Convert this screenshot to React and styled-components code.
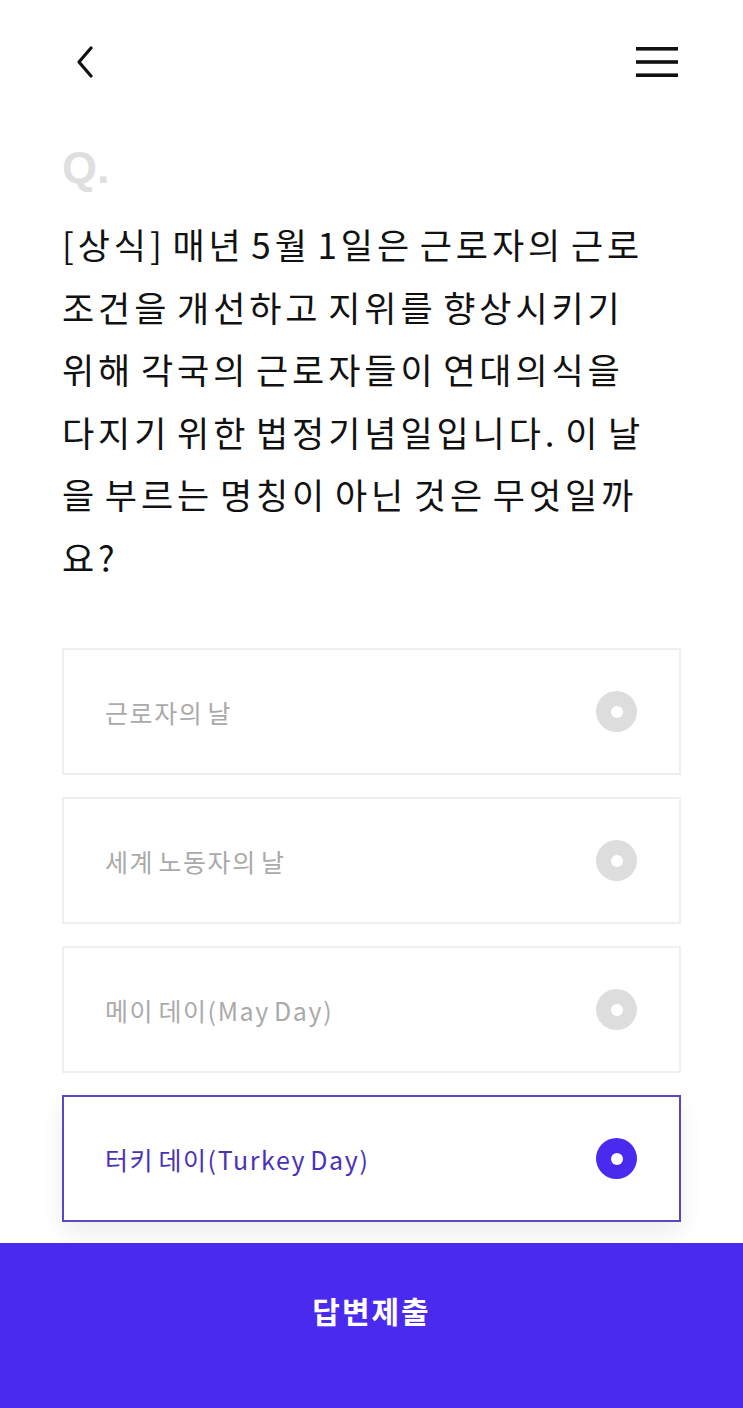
import React, { useState } from 'react';
import styled, { createGlobalStyle } from 'styled-components';

const fontKr = `'Noto Sans CJK KR', 'Noto Sans', sans-serif`;
const purple = '#4b2af0';

const GlobalStyle = createGlobalStyle`
  html, body {
    margin: 0;
    padding: 0;
    background: #fff;
  }
  body {
    font-family: ${fontKr};
  }
`;

const Page = styled.div`
  width: 743px;
  min-height: 1408px;
  display: flex;
  flex-direction: column;
  background: #fff;
`;

const Header = styled.header`
  height: 124px;
  padding: 0 64px 0 70px;
  display: flex;
  align-items: center;
  justify-content: space-between;
  box-sizing: border-box;
`;

const IconButton = styled.button`
  border: none;
  background: none;
  padding: 0;
  width: ${({ w }) => w || '30px'};
  height: 34px;
  display: flex;
  align-items: center;
  justify-content: center;
  cursor: pointer;
`;

const Content = styled.main`
  flex: 1;
  padding: 22px 62px 0 62px;
`;

const QMark = styled.div`
  font-family: 'Liberation Sans', Arial, sans-serif;
  font-weight: 700;
  font-size: 45px;
  line-height: 44px;
  color: #dfdfdf;
  margin-bottom: 23px;
`;

const Question = styled.h1`
  margin: 0;
  font-family: ${fontKr};
  font-weight: 400;
  font-size: 35px;
  line-height: 62.5px;
  letter-spacing: 3.9px;
  word-spacing: -5px;
  color: #111;
  > span {
    display: block;
    white-space: nowrap;
  }
`;

const Options = styled.ul`
  list-style: none;
  margin: 60px 0 0;
  padding: 0;
  display: flex;
  flex-direction: column;
  gap: 22px;
`;

const Option = styled.li`
  height: 127px;
  box-sizing: border-box;
  border: 2px solid ${({ active }) => (active ? '#5b46c4' : '#efefef')};
  box-shadow: ${({ active }) => (active ? '0 10px 22px rgba(0, 0, 0, 0.08)' : 'none')};
  display: flex;
  align-items: center;
  justify-content: space-between;
  padding: 0 42px 0 41px;
  cursor: pointer;
`;

const OptionText = styled.span`
  font-family: ${fontKr};
  font-size: 25px;
  letter-spacing: 1.6px;
  word-spacing: -3px;
  color: ${({ active }) => (active ? '#4a31b8' : '#aaaaaa')};
`;

const Radio = styled.span`
  width: 41px;
  height: 41px;
  border-radius: 50%;
  background: ${({ active }) => (active ? purple : '#dddddd')};
  display: flex;
  align-items: center;
  justify-content: center;
  &:after {
    content: '';
    width: 12px;
    height: 12px;
    border-radius: 50%;
    background: #fff;
  }
`;

const Submit = styled.button`
  margin-top: 21px;
  height: 165px;
  width: 100%;
  border: none;
  padding: 0 0 32px;
  background: ${purple};
  color: #fff;
  font-family: ${fontKr};
  font-weight: 700;
  font-size: 30px;
  letter-spacing: 2px;
  cursor: pointer;
`;

const lines = [
  '[상식] 매년 5월 1일은 근로자의 근로',
  '조건을 개선하고 지위를 향상시키기',
  '위해 각국의 근로자들이 연대의식을',
  '다지기 위한 법정기념일입니다. 이 날',
  '을 부르는 명칭이 아닌 것은 무엇일까',
  '요?'
];

const answers = ['근로자의 날', '세계 노동자의 날', '메이 데이(May Day)', '터키 데이(Turkey Day)'];

export default function App() {
  const [picked, setPicked] = useState(3);
  return (
    <Page>
      <GlobalStyle />
      <Header>
        <IconButton aria-label="뒤로">
          <svg width="22" height="32" viewBox="0 0 22 32">
            <path d="M17 2 L5 16 L17 30" fill="none" stroke="#111" strokeWidth="3.2" strokeLinecap="round" strokeLinejoin="round" />
          </svg>
        </IconButton>
        <IconButton w="44px" aria-label="메뉴">
          <svg width="42" height="30" viewBox="0 0 42 30">
            <rect x="0" y="0" width="42" height="3.6" fill="#111" />
            <rect x="0" y="13.2" width="42" height="3.6" fill="#111" />
            <rect x="0" y="26.4" width="42" height="3.6" fill="#111" />
          </svg>
        </IconButton>
      </Header>
      <Content>
        <QMark>Q.</QMark>
        <Question>
          {lines.map((l) => (
            <span key={l}>{l}</span>
          ))}
        </Question>
        <Options>
          {answers.map((a, i) => (
            <Option key={a} active={i === picked} onClick={() => setPicked(i)}>
              <OptionText active={i === picked}>{a}</OptionText>
              <Radio active={i === picked} />
            </Option>
          ))}
        </Options>
      </Content>
      <Submit>답변제출</Submit>
    </Page>
  );
}
